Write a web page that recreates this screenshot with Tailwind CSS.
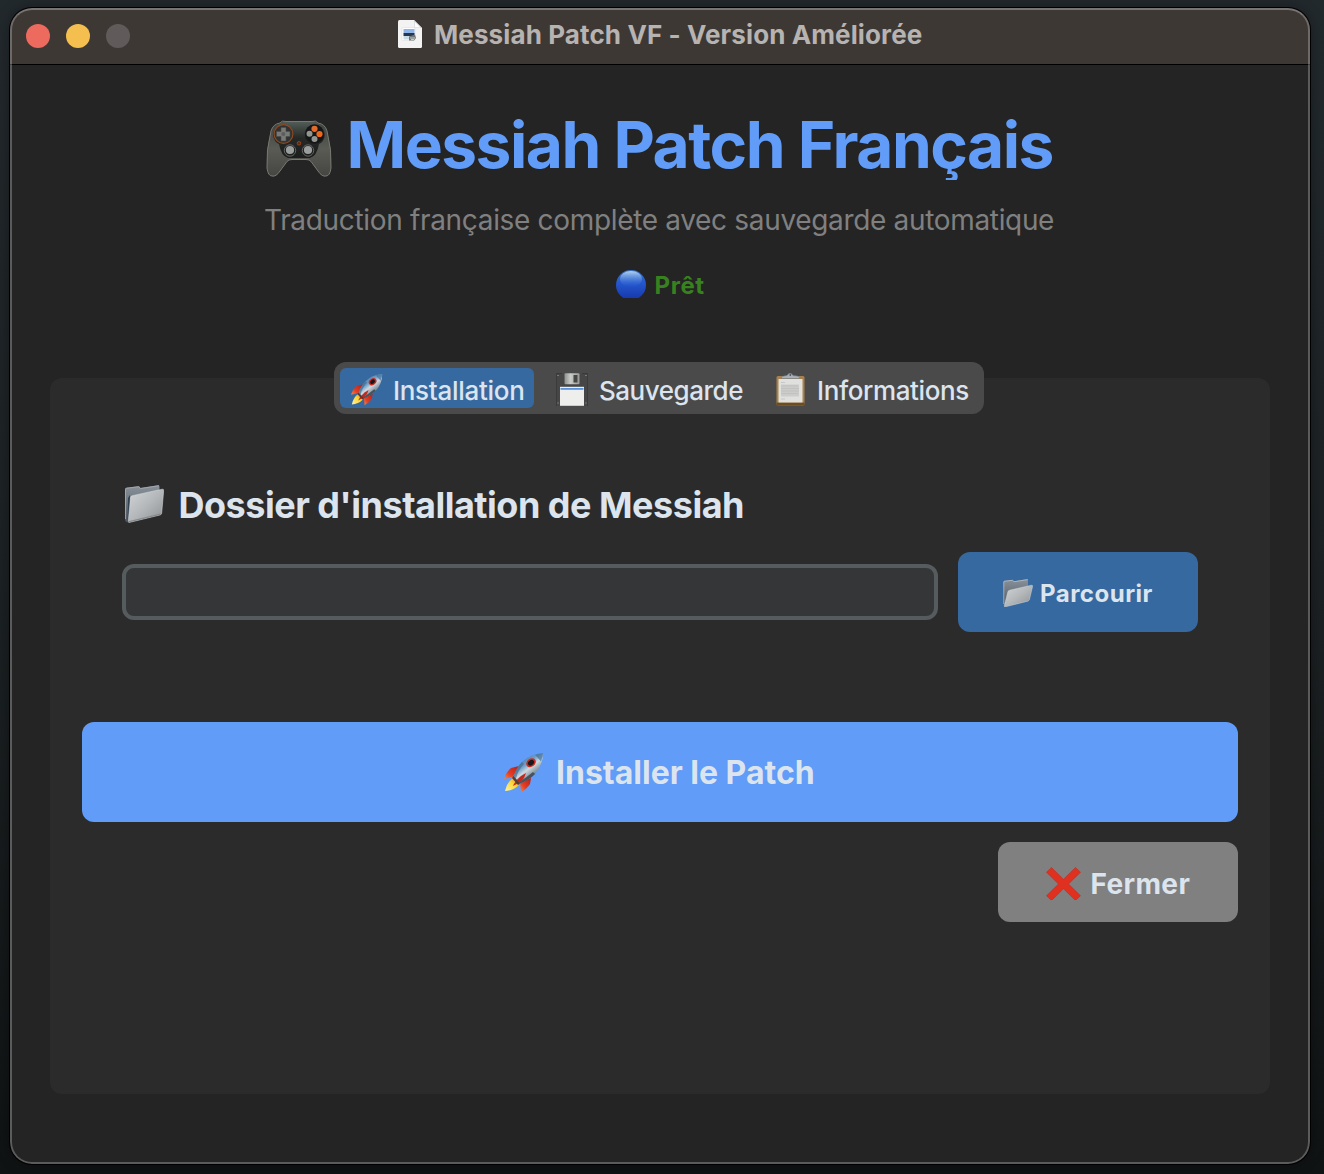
<!DOCTYPE html>
<html lang="fr">
<head>
<meta charset="utf-8">
<title>Messiah Patch VF</title>
<script src="https://cdn.jsdelivr.net/npm/@tailwindcss/browser@4"></script>
</head>
<body class="h-[1174px] w-[1324px] overflow-hidden bg-linear-to-b from-[#22292d] via-[#1c2123] to-[#101314] pt-2 pl-[10px] font-['Inter','Liberation_Sans',sans-serif] text-[#dce4ee]">
<svg class="absolute h-0 w-0">
  <defs>
    <linearGradient id="fBack" x1="0" y1="0" x2="0" y2="1"><stop offset="0" stop-color="#89929b"/><stop offset="1" stop-color="#4c5660"/></linearGradient>
    <linearGradient id="fFront" x1="0" y1="0" x2="1" y2="1"><stop offset="0" stop-color="#d3d6d9"/><stop offset=".5" stop-color="#b4b8bb"/><stop offset="1" stop-color="#8c9093"/></linearGradient>
    <linearGradient id="rBody" x1=".2" y1=".1" x2=".8" y2=".9"><stop offset="0" stop-color="#3f6f98"/><stop offset=".35" stop-color="#6f9fc8"/><stop offset=".52" stop-color="#d0d8dd"/><stop offset=".85" stop-color="#5c7386"/></linearGradient>
    <linearGradient id="rFin" x1="1" y1="0" x2="0" y2="1"><stop offset="0" stop-color="#b3201a"/><stop offset=".6" stop-color="#e63c22"/><stop offset="1" stop-color="#f58a4a"/></linearGradient>
    <linearGradient id="rFlame" x1="1" y1="0" x2="0" y2="1"><stop offset="0" stop-color="#f07a1c"/><stop offset=".45" stop-color="#fbd83c"/><stop offset="1" stop-color="#fff3a0"/></linearGradient>
  </defs>
  <symbol id="rocket" viewBox="0 0 40 40">
    <path d="M15 13 L7 15 Q2 19 0 26 L12 23z" fill="url(#rFin)"/>
    <path d="M27 25 L26 31 Q23 36 17 39 L16 29z" fill="url(#rFin)"/>
    <path d="M9 25 Q3 29 1 38 Q9 38 15 32z" fill="url(#rFlame)"/>
    <path d="M39 0 Q26 1 18 9 Q13 14 9.500 23 L16 30.500 Q25 27 31 21 Q39 12 39 0z" fill="url(#rBody)"/>
    <path d="M39 0 Q34 .5 31 1.800 L37 8.500 Q39 4 39 0z" fill="#3d6f9b" opacity=".7"/>
    <path d="M18 9 Q13 14 9.500 23 L12 25.500 Q14 17 20 11z" fill="#3f6687" opacity=".6"/>
    <path d="M31 21 Q25 27 16 30.500 L14.500 29 Q22 25 29 19z" fill="#39424b" opacity=".8"/>
    <ellipse cx="27" cy="9.700" rx="5.200" ry="4" transform="rotate(-38 27 9.700)" fill="#c92b22"/>
    <ellipse cx="27" cy="9.700" rx="3.300" ry="2.500" transform="rotate(-38 27 9.700)" fill="#17191c"/>
    <path d="M22 20 L17 23 Q11 28 9 33 Q17 29 20 25z" fill="#c4271d"/>
    <path d="M9.500 23 L16 30.500 L14 32 L8 25z" fill="#573b36"/>
  </symbol>
  <symbol id="folder" viewBox="0 0 39 38">
    <path d="M0 4.500 Q0 3 1.500 2.800 L13.500 1.200 Q15 1 15.500 3 L33 .2 Q34.500 0 34.500 2 L34 30 L3 37.500 Q0 37 0 34z" fill="url(#fBack)"/>
    <path d="M.5 34 V4.500 Q.5 3.300 1.700 3.200 L13.500 1.700 L15.500 3.500 L34 .7" fill="none" stroke="#a8adb2" stroke-width=".8"/>
    <path d="M3 13 L5 10 V36 L2.500 37z" fill="#334352"/>
    <path d="M5.500 12.500 Q5.700 11 7.200 10.700 L37.200 4.200 Q38.800 4 38.700 5.500 L36.700 28 Q36.500 29.700 35 30 L5 37.300 Q3.200 37.700 3.300 36z" fill="url(#fFront)" stroke="#dfe1e3" stroke-width=".5"/>
    <path d="M3.300 36.800 L35.500 29.200" stroke="#85898c" stroke-width="1.200"/>
  </symbol>
  <symbol id="folder-open" viewBox="0 0 30 28">
    <path d="M.5 3 Q.5 2 1.500 1.900 L9.500 1 L11 2.300 L24 .2 Q25 0 25 1.500 V20 L1.500 27z" fill="url(#fBack)"/>
    <path d="M.8 25 V3 Q.8 2.300 1.500 2.200 L9.500 1.300 L11 2.700 L24.700 .6" fill="none" stroke="#b9bec2" stroke-width=".8"/>
    <path d="M4.800 13 Q5.200 11.500 6.500 11.200 L28.300 6.200 Q30 6 29.600 7.500 L26.500 20.500 Q26 21.800 24.800 22.200 L2.500 27.800 Q1 28 1.300 26.500z" fill="url(#fFront)" stroke="#dfe1e3" stroke-width=".4"/>
  </symbol>
</svg>

<main class="relative flex h-[1156px] w-[1300px] flex-col overflow-hidden rounded-[22px] bg-[#242424] shadow-[0_0_0_1px_#000,0_0_14px_rgba(0,0,0,0.4)]">
  <header class="flex h-[57px] shrink-0 items-start border-b border-black bg-[#3e3835] pl-4">
    <div class="flex gap-4 pt-4">
      <span class="size-6 rounded-full bg-[#ed6a5e]"></span>
      <span class="size-6 rounded-full bg-[#f5bf4f]"></span>
      <span class="size-6 rounded-full bg-[#605b5a]"></span>
    </div>
    <svg class="mt-3 ml-[268px] h-7 w-6 shrink-0" viewBox="0 0 24 28">
      <path d="M1.500 0 H16 L24 8 V26.500 Q24 28 22.500 28 H1.500 Q0 28 0 26.500 V1.500 Q0 0 1.500 0z" fill="#f3f3f3"/>
      <path d="M16 0 V6.500 Q16 8 17.500 8 H24z" fill="#cfcfcf"/><path d="M16.600 1.500 V6.500 Q16.600 7.500 17.600 7.500 H22.500z" fill="#fff"/>
      <rect x="4" y="7.500" width="13" height="13" rx="1" fill="#fff" stroke="#ddd" stroke-width=".6"/>
      <rect x="5.500" y="9" width="11" height="4.500" fill="#8fb4ea"/><rect x="5.500" y="13" width="11" height="3" fill="#26374c"/>
      <rect x="5.500" y="16" width="11" height="3.500" fill="#c9dbe6"/><path d="M11 16.500 L17 14.500 L18 18 L16 20.500 H11z" fill="#6f7677"/><path d="M12 18 H17 M13 19.500 H16" stroke="#ddd" stroke-width=".8"/>
    </svg>
    <h1 class="mt-[7px] ml-3 h-10 text-[26px] leading-10 font-bold tracking-[0.11px] whitespace-nowrap text-[#b7b3b1]">Messiah Patch VF - Version Améliorée</h1>
  </header>

  <section class="flex h-[256px] shrink-0 flex-col">
    <div class="mt-[45px] flex h-[70px] shrink-0 items-center overflow-hidden pl-[256px]">
      <svg class="mt-[7px] h-[58px] w-[66px] shrink-0" viewBox="0 0 66 58">
        <defs>
          <linearGradient id="pad" x1="0" y1="0" x2="0" y2="1"><stop offset="0" stop-color="#3d403d"/><stop offset=".5" stop-color="#5a5b55"/><stop offset="1" stop-color="#454641"/></linearGradient>
          <linearGradient id="padTop" x1="0" y1="0" x2="0" y2="1"><stop offset="0" stop-color="#525c57"/><stop offset=".45" stop-color="#252927"/><stop offset="1" stop-color="#1c1d1c"/></linearGradient>
        </defs>
        <path d="M14 3 Q16 0 20 1.500 H46 Q50 0 52 3 Q59 4 61 11 Q66 30 65 48 Q64 56 60 56 Q56 57 52 51 L45 41.500 Q43.500 39.500 40 39.500 H26 Q22.500 39.500 21 41.500 L14 51 Q10 57 6 56 Q2 56 1 48 Q0 30 5 11 Q7 4 14 3z" fill="url(#pad)" stroke="#777a72" stroke-width="1"/>
        <path d="M15 3 Q17 1.500 21 2 H45 Q49 1.500 51 3 Q58 6 59 15 Q58 22 53 24 Q51 36 44 38 H22 Q15 36 13 24 Q8 22 7 15 Q8 6 15 3z" fill="url(#padTop)"/>
        <circle cx="17.500" cy="14" r="9.400" fill="#303331" stroke="#914920" stroke-width="1.100"/>
        <path d="M15 7.500 H20 V11.500 H24 V16.500 H20 V21 H15 V16.500 H10.500 V11.500 H15z" fill="#777a77" stroke="#484b49" stroke-width=".6"/><circle cx="17.300" cy="14" r="2" fill="#5b5e5c"/>
        <circle cx="48.500" cy="14" r="9.700" fill="#151716"/>
        <circle cx="48.500" cy="8.800" r="3.100" fill="#e5692a"/><circle cx="53.500" cy="14" r="3.100" fill="#ef671b"/><circle cx="43.500" cy="13.800" r="3" fill="#929592"/><circle cx="48.500" cy="19" r="3" fill="#929592"/>
        <circle cx="33" cy="23.300" r="1.800" fill="#5b2c15" stroke="#a34b20" stroke-width=".8"/>
        <circle cx="24" cy="30.500" r="5.700" fill="#1e201f" stroke="#777" stroke-width=".8"/><circle cx="24" cy="30" r="4.100" fill="#9a9e9d"/>
        <circle cx="42" cy="30.500" r="5.700" fill="#1e201f" stroke="#777" stroke-width=".8"/><circle cx="42" cy="30" r="4.100" fill="#9a9e9d"/>
      </svg>
      <h2 class="ml-[14.5px] text-[64px] leading-[70px] font-bold tracking-[-1.5px] whitespace-nowrap text-[#609cf8]">Messiah Patch Français</h2>
    </div>
    <p class="mt-5 h-10 shrink-0 pl-[254px] text-[28px] leading-10 tracking-[-0.33px] whitespace-nowrap text-[#808080]">Traduction française complète avec sauvegarde automatique</p>
    <div class="mt-[25px] flex h-10 shrink-0 items-center pl-[606px]">
      <svg class="mt-[-2px] h-7 w-[30px] shrink-0" viewBox="0 0 30 28">
        <defs><linearGradient id="ball" x1="0" y1="0" x2="0" y2="1"><stop offset="0" stop-color="#3c74c6"/><stop offset=".4" stop-color="#2559cf"/><stop offset="1" stop-color="#1735ac"/></linearGradient><linearGradient id="shine" x1="0" y1="0" x2="0" y2="1"><stop offset="0" stop-color="#b0d2f2"/><stop offset="1" stop-color="#3b72d8" stop-opacity="0"/></linearGradient></defs>
        <circle cx="15" cy="15" r="15" fill="url(#ball)"/><ellipse cx="15" cy="9" rx="11" ry="8" fill="url(#shine)"/>
      </svg>
      <span class="mt-0.5 ml-[8.5px] text-[24px] leading-10 font-bold tracking-[0.6px] text-[#38811f]">Prêt</span>
    </div>
  </section>

  <section class="mx-10 mt-[57px] flex h-[716px] shrink-0 flex-col rounded-[12px] bg-[#2b2b2b] px-8">
    <nav class="-mt-4 mr-0.5 flex h-[52px] w-[650px] shrink-0 self-center rounded-[12px] bg-[#4a4a4a] p-1.5 text-[26px] leading-10 font-medium">
      <div class="flex h-10 w-[194px] items-center rounded-[6px] bg-[#36699f] pl-[11px]">
        <svg class="mt-[3px] h-8 w-8 shrink-0"><use href="#rocket"/></svg>
        <span class="mt-[5px] ml-2.5 tracking-[-0.3px] whitespace-nowrap">Installation</span>
      </div>
      <div class="flex h-10 w-[220px] items-center pl-[22px]">
        <svg class="mt-[3px] h-[33px] w-8 shrink-0" viewBox="0 0 32 33">
          <defs><linearGradient id="met" x1="0" y1="0" x2="1" y2="0"><stop offset="0" stop-color="#8d908e"/><stop offset=".4" stop-color="#c9cbc8"/><stop offset="1" stop-color="#9a9b99"/></linearGradient></defs>
          <path d="M0 .5 H32 V33 H0z" fill="#464646"/><path d="M.5 33 V.5 H6 M26 .5 H31.500 V33" fill="none" stroke="#3a3a3a"/>
          <path d="M1 2.500 H3 M29 2.500 H31 M1 30 H3 M29 30 H31" stroke="#777" stroke-width="1"/>
          <rect x="8.500" y=".3" width="15" height="11" rx="1" fill="url(#met)"/><rect x="17.500" y="2" width="4" height="7.500" fill="#454745"/>
          <rect x="4" y="13.800" width="24" height="19" fill="#eeeeec"/><rect x="4.500" y="15" width="23" height="1.800" fill="#5a92dd"/>
        </svg>
        <span class="mt-[5px] ml-[11px] tracking-[-0.47px] whitespace-nowrap">Sauvegarde</span>
      </div>
      <div class="flex h-10 items-center pl-[22px]">
        <svg class="mt-[3px] h-[33px] w-[29px] shrink-0" viewBox="0 0 29 33">
          <rect x=".5" y="3" width="28" height="29.500" rx="1.500" fill="#a9824b"/><rect x=".5" y="29.500" width="28" height="3" rx="1" fill="#6d4c1e"/>
          <rect x="2.500" y="6" width="24" height="23.500" fill="#e0e0de"/><rect x="5" y="11.500" width="18" height="12" fill="#cccccb"/>
          <path d="M5 9.500 H9 M5 26 H9 M5 13 H22 M5 15.500 H23 M5 18 H23 M5 20.500 H22" stroke="#bbb" stroke-width=".7"/>
          <path d="M5 5.500 Q5 3.500 8 3 L11 2.500 Q14 -2 17 2.500 L21 3 Q24 3.500 24 5.500z" fill="#a9b0b7" stroke="#747b82" stroke-width=".6"/><circle cx="14.300" cy="2" r=".9" fill="#4c5258"/>
        </svg>
        <span class="mt-[5px] ml-3 tracking-[-0.4px] whitespace-nowrap">Informations</span>
      </div>
    </nav>

    <div class="mt-[66px] flex h-[50px] shrink-0 items-center pl-[43px]">
      <svg class="-mt-0.5 h-[38px] w-[39px] shrink-0"><use href="#folder"/></svg>
      <h3 class="ml-[14.5px] text-[36px] leading-[50px] font-bold tracking-[-0.49px] whitespace-nowrap">Dossier d'installation de Messiah</h3>
    </div>

    <div class="mt-[22px] flex h-20 shrink-0 items-center gap-5 px-10">
      <input type="text" class="h-14 w-[816px] shrink-0 rounded-[12px] border-4 border-[#565b5e] bg-[#343638]">
      <button class="flex h-20 w-60 items-center rounded-[12px] bg-[#36699f] pl-[45px] text-[24px] leading-10 font-bold">
        <svg class="mt-0.5 h-7 w-[30px] shrink-0"><use href="#folder-open"/></svg>
        <span class="mt-[3px] ml-[7px] tracking-[0.5px]">Parcourir</span>
      </button>
    </div>

    <button class="mt-[90px] flex h-[100px] shrink-0 items-center rounded-[12px] bg-[#609cf8] pl-[422px] text-[32px] leading-10 font-bold">
      <svg class="mt-px h-10 w-10 shrink-0"><use href="#rocket"/></svg>
      <span class="mt-0.5 ml-3 whitespace-nowrap">Installer le Patch</span>
    </button>
    <button class="mt-5 flex h-20 w-60 shrink-0 items-center self-end rounded-[12px] bg-[#808080] pl-12 text-[28px] leading-10 font-bold">
      <svg class="mt-[3px] h-[33px] w-[35px] shrink-0" viewBox="0 0 35 33"><path d="M5.500 .5 L17.500 12.300 L29.500 .5 L34.500 5.300 L22.500 17 L34.500 28.700 L30 33 H29 L17.500 21.700 L6 33 H5 L.5 28.700 L12.500 17 L.5 5.300z" fill="#e0301f" stroke="#b72d20" stroke-width=".5"/></svg>
      <span class="mt-1 ml-[9.5px] tracking-[0.35px]">Fermer</span>
    </button>
  </section>
  <div class="pointer-events-none absolute inset-0 rounded-[22px] border-2 border-white/25 border-t-white/30"></div>
</main>
</body>
</html>
